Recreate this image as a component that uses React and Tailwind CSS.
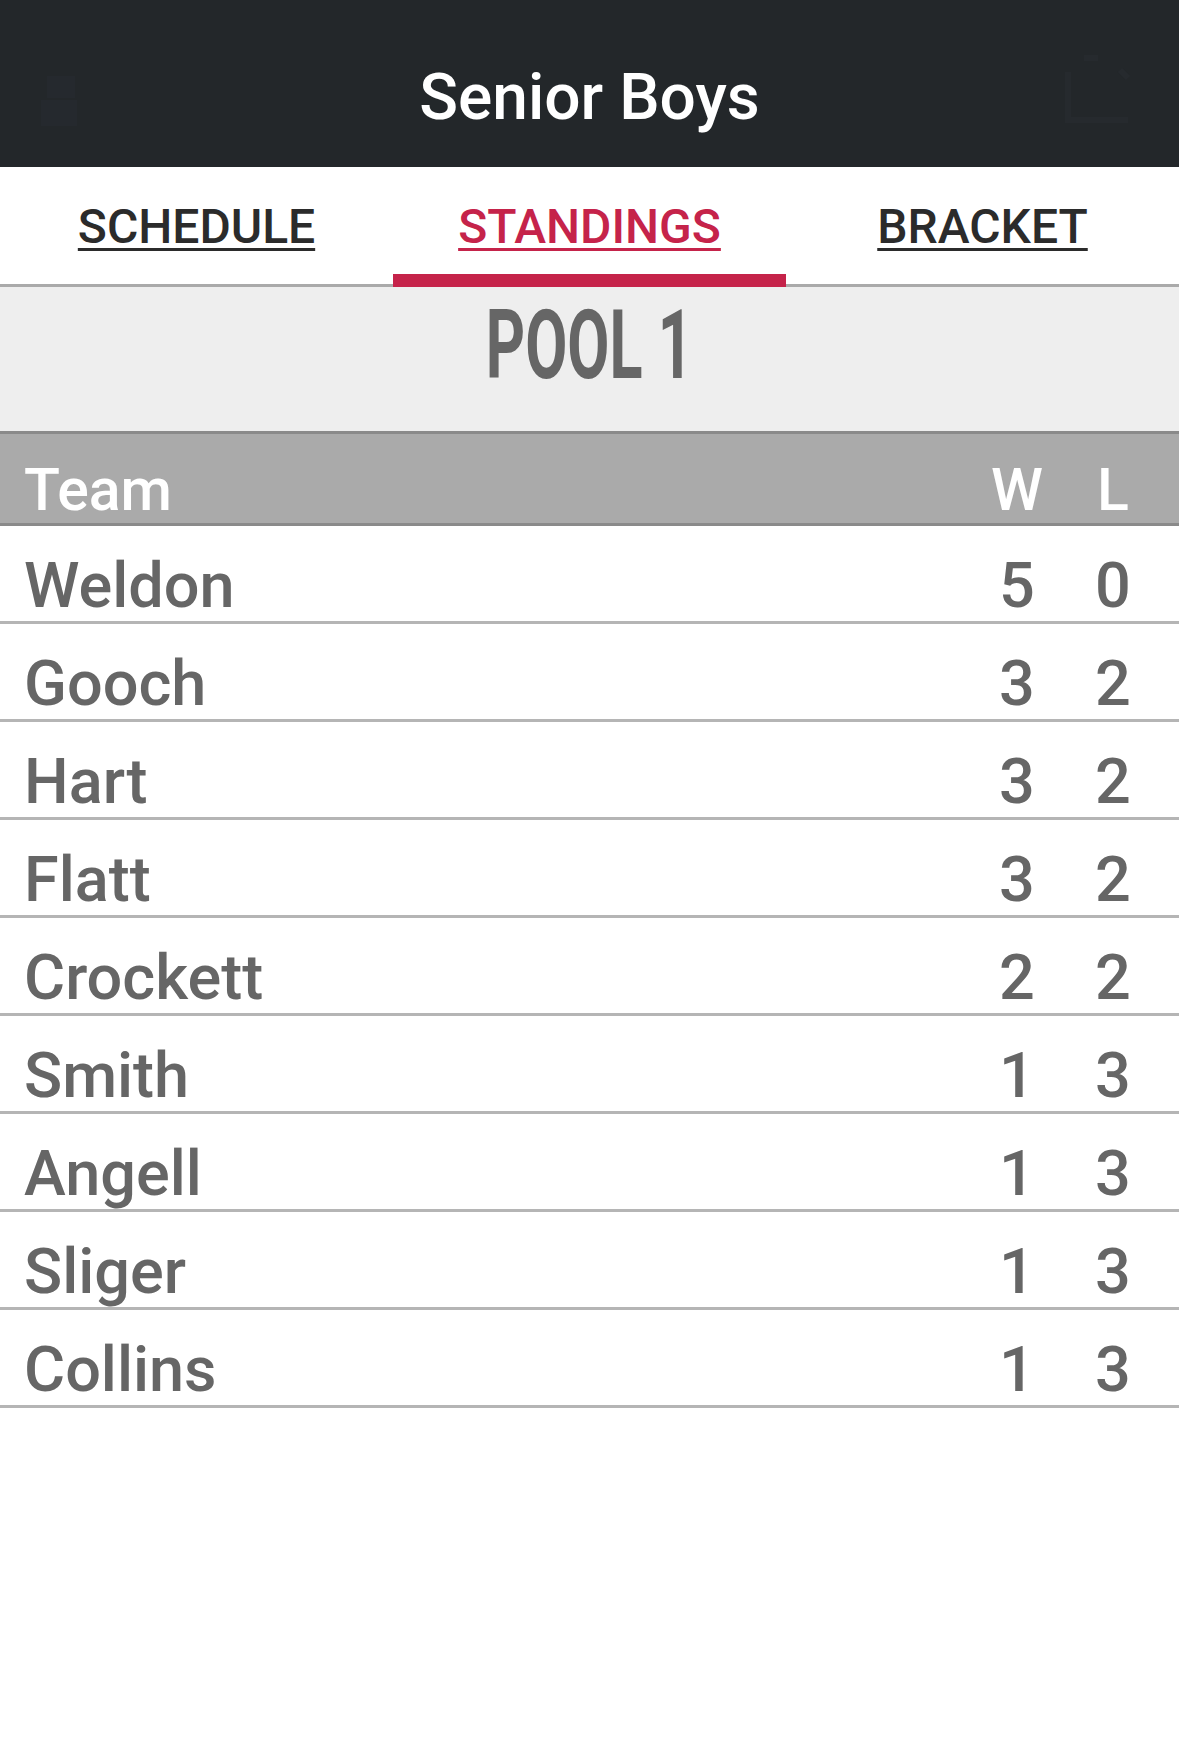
import React from "react";

const rows = [
  ["Weldon", 5, 0],
  ["Gooch", 3, 2],
  ["Hart", 3, 2],
  ["Flatt", 3, 2],
  ["Crockett", 2, 2],
  ["Smith", 1, 3],
  ["Angell", 1, 3],
  ["Sliger", 1, 3],
  ["Collins", 1, 3],
];

export default function App() {
  return (
    <div className="w-[1179px] min-h-[1748px] bg-white font-['Roboto',sans-serif]">
      <div className="relative h-[167px] bg-[#23272a] pt-[66px] text-center">
        <svg className="absolute left-[37px] top-[64px]" width="50" height="64" viewBox="0 0 50 64" fill="#25292e">
          <rect x="10" y="12" width="28" height="22" />
          <rect x="4" y="36" width="36" height="26" />
        </svg>
        <svg className="absolute left-[1050px] top-[48px]" width="80" height="80" viewBox="0 0 80 80" fill="none" stroke="#262a2e" strokeWidth="6">
          <path d="M18 24v48h60" />
          <path d="M34 10h14" />
          <path d="M70 22l8 8" />
        </svg>
        <h1 className="text-[64px] leading-none font-medium text-white">Senior Boys</h1>
      </div>

      <div className="relative grid grid-cols-3 h-[120px] border-b-[3px] border-[#aaaaaa]">
        {["SCHEDULE", "STANDINGS", "BRACKET"].map((t, i) => (
          <div key={t} className="flex justify-center pt-[36px]">
            <span
              className={
                "text-[48px] leading-none font-medium underline decoration-[3px] underline-offset-[5px] " +
                (i === 1 ? "text-[#c5234a]" : "text-[#2b2b2b]")
              }
            >
              {t}
            </span>
          </div>
        ))}
        <div className="absolute left-[393px] bottom-[-3px] w-[393px] h-[13px] bg-[#c5234a]" />
      </div>

      <div className="h-[147px] bg-[#eeeeee] border-b-[3px] border-[#8a8a8a] pt-[10px] text-center">
        <span className="inline-block text-[97px] leading-none font-bold text-[#666666] scale-x-[0.63] origin-center">
          POOL 1
        </span>
      </div>

      <div className="flex h-[92px] bg-[#aaaaaa] border-b-[3px] border-[#8a8a8a] pt-[26px] pl-[24px] pr-[18px] text-white text-[59px] leading-none font-medium">
        <div className="flex-1">Team</div>
        <div className="w-[96px] text-center">W</div>
        <div className="w-[96px] text-center">L</div>
      </div>

      {rows.map(([name, w, l]) => (
        <div
          key={name}
          className="flex h-[98px] border-b-[3px] border-[#b5b5b5] pt-[28px] pl-[24px] pr-[18px] text-[#666666] text-[63px] leading-none font-medium"
        >
          <div className="flex-1">{name}</div>
          <div className="w-[96px] text-center">{w}</div>
          <div className="w-[96px] text-center">{l}</div>
        </div>
      ))}
    </div>
  );
}
